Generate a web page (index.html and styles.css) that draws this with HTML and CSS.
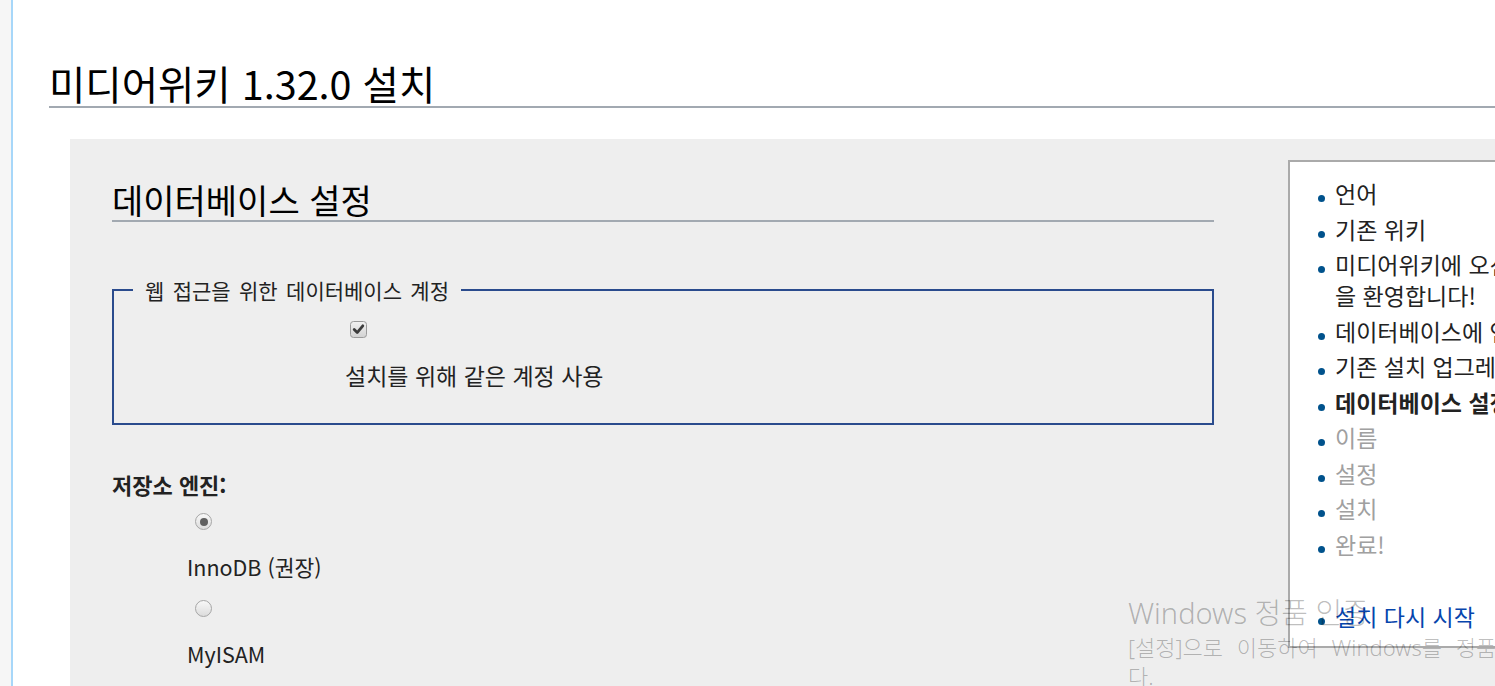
FILE: index.html
```html
<!DOCTYPE html>
<html lang="ko">
<head>
<meta charset="utf-8">
<title>미디어위키 1.32.0 설치</title>
<link rel="stylesheet" href="styles.css">
</head>
<body>
<div class="page">
  <div class="rail"></div>
  <div class="content">
    <h1 class="title">미디어위키 1.32.0 설치</h1>
    <div class="panel">
      <div class="main">
        <h2 class="section-title">데이터베이스 설정</h2>
        <fieldset class="account">
          <legend class="account-legend">웹 접근을 위한 데이터베이스 계정</legend>
          <div class="check-field">
            <span class="checkbox">
              <svg width="17" height="17" viewBox="0 0 17 17">
                <defs>
                  <linearGradient id="cbg" x1="0" y1="0" x2="0" y2="1">
                    <stop offset="0" stop-color="#f2f2f2"/>
                    <stop offset="1" stop-color="#d2d2d2"/>
                  </linearGradient>
                </defs>
                <rect x="0.5" y="0.5" width="16" height="16" rx="3" fill="url(#cbg)" stroke="#9a9a9a"/>
                <path d="M4.2 8.6 L7.2 11.6 L12.8 4.8" fill="none" stroke="#3c3c3c" stroke-width="2.8" stroke-linecap="round" stroke-linejoin="round"/>
              </svg>
            </span>
            <div class="check-label">설치를 위해 같은 계정 사용</div>
          </div>
        </fieldset>
        <div class="engine-label">저장소 엔진:</div>
        <div class="radio-list">
          <div class="radio-item">
            <span class="radio radio-on"></span>
            <div class="radio-label">InnoDB (권장)</div>
          </div>
          <div class="radio-item">
            <span class="radio"></span>
            <div class="radio-label">MyISAM</div>
          </div>
        </div>
      </div>
      <aside class="sidebar">
        <ul class="steps">
          <li>언어</li>
          <li>기존 위키</li>
          <li>미디어위키에 오신 것을 환영합니다!</li>
          <li>데이터베이스에 연결</li>
          <li>기존 설치 업그레이드</li>
          <li class="step-current">데이터베이스 설정</li>
          <li class="step-todo">이름</li>
          <li class="step-todo">설정</li>
          <li class="step-todo">설치</li>
          <li class="step-todo">완료!</li>
        </ul>
        <ul class="steps steps-extra">
          <li><a class="restart-link" href="#">설치 다시 시작</a></li>
        </ul>
      </aside>
    </div>
  </div>
</div>
<div class="watermark">
  <div class="wm-title">Windows 정품 인증</div>
  <div class="wm-text">[설정]으로 이동하여 Windows를 정품 인증합니<br>다.</div>
</div>
</body>
</html>
```

FILE: styles.css
```css
html, body {
  margin: 0;
  padding: 0;
}

body {
  width: 1495px;
  height: 686px;
  overflow: hidden;
  position: relative;
  background: #fff;
  color: #222;
  font-family: "Noto Sans CJK KR", "Noto Sans", sans-serif;
}

.page {
  display: flex;
  width: 1800px;
  min-height: 686px;
}

.rail {
  flex: none;
  width: 11px;
  background: #f6f6f6;
  border-right: 2px solid #a7d7f9;
}

.content {
  flex: none;
  width: 1751px;
  padding-left: 36px;
}

.title {
  margin: 0;
  padding-top: 59px;
  font-size: 39.5px;
  font-weight: normal;
  line-height: 47px;
  color: #000;
  border-bottom: 2px solid #a2a9b1;
}

.panel {
  margin: 31px 0 0 21px;
  padding-left: 42px;
  min-height: 620px;
  background: #eee;
  display: flex;
  align-items: flex-start;
}

.main {
  flex: none;
  width: 1102px;
}

.section-title {
  margin: 41px 0 0;
  font-size: 34px;
  font-weight: normal;
  line-height: 40px;
  color: #000;
  border-bottom: 2px solid #a2a9b1;
}

.account {
  margin: 55px 0 0;
  padding: 0 0 33px 19px;
  border: 2px solid #2a4b8d;
  min-width: 0;
}

.account-legend {
  padding: 0 12px;
  font-size: 21px;
  line-height: 26px;
  word-spacing: 2.5px;
}

.check-field {
  margin-left: 212px;
}

.checkbox {
  display: block;
  width: 17px;
  height: 17px;
  margin: 18px 0 0 5px;
}

.checkbox svg {
  display: block;
}

.check-label {
  margin-top: 22px;
  font-size: 23px;
  line-height: 30px;
}

.engine-label {
  margin-top: 44px;
  font-size: 22px;
  line-height: 30px;
  font-weight: bold;
}

.radio-list {
  margin-left: 75px;
}

.radio {
  display: block;
  box-sizing: border-box;
  width: 17px;
  height: 17px;
  margin: 14px 0 0 8px;
  border-radius: 50%;
  border: 1px solid #a6a6a6;
  background: linear-gradient(#f8f8f8, #dcdcdc);
  position: relative;
}

.radio-item + .radio-item .radio {
  margin-top: 18px;
}

.radio-on::after {
  content: "";
  position: absolute;
  left: 3.5px;
  top: 3.5px;
  width: 8px;
  height: 8px;
  border-radius: 50%;
  background: #5f5f5f;
}

.radio-label {
  margin-top: 22px;
  font-size: 21.5px;
  line-height: 30px;
}

.sidebar {
  flex: none;
  width: 290px;
  margin: 21px 0 0 74px;
  padding-bottom: 9px;
  background: #fff;
  border: 2px solid #aaa;
}

.steps {
  list-style: none;
  margin: 16px 0 0;
  padding: 0 0 0 45px;
  width: 215px;
  font-size: 23px;
  line-height: 31px;
}

.steps li {
  position: relative;
  margin-bottom: 4.5px;
}

.steps li::before {
  content: "";
  position: absolute;
  left: -17px;
  top: 17px;
  width: 7px;
  height: 7px;
  border-radius: 50%;
  background: #00528c;
}

.step-current {
  font-weight: bold;
}

.step-todo {
  color: #a0a0a0;
}

.steps-extra {
  margin-top: 41.5px;
}

.restart-link {
  color: #0645ad;
  text-decoration: none;
}

.watermark {
  position: absolute;
  left: 1128px;
  top: 595px;
  color: rgba(0, 0, 0, 0.27);
  font-family: "Noto Sans", "Noto Sans CJK KR", sans-serif;
  font-weight: 300;
  white-space: nowrap;
  pointer-events: none;
}

.wm-title {
  font-size: 29px;
  line-height: 36px;
}

.wm-text {
  padding-top: 2px;
  font-size: 22px;
  line-height: 29px;
  word-spacing: 8px;
}
```
